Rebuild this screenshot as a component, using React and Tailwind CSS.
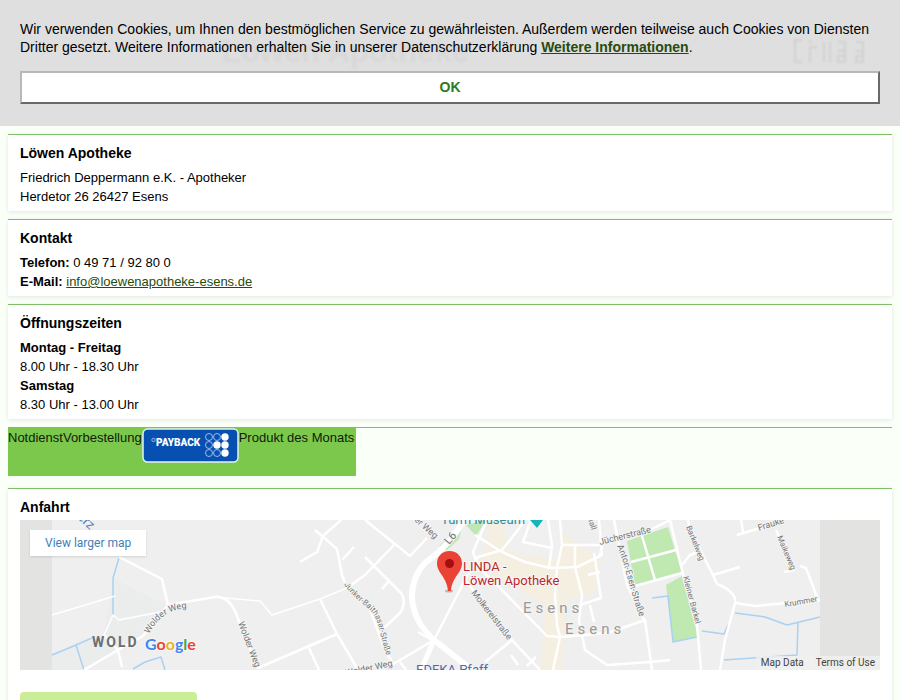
import React from "react";

function Card({ title, children }) {
  return (
    <section className="border-t border-[#7fbf6a] bg-white px-3 pt-2 pb-[5px] shadow-[0_1px_4px_rgba(0,0,0,0.1)]">
      <h2 className="mb-[5px] text-sm leading-5 font-bold">{title}</h2>
      {children}
    </section>
  );
}

function CookieBanner() {
  return (
    <div className="relative bg-[#dfdfdf] px-5 pt-5 pb-[22px]">
      <div
        aria-hidden="true"
        className="absolute inset-x-0 top-9 flex items-center justify-between pr-8 pl-[222px] text-[31px] leading-8 font-bold text-[#d8d8d8] blur-[1px]"
      >
        <span>Löwen Apotheke</span>
        <svg width="76" height="28" viewBox="0 0 76 28" fill="none" stroke="#cdcdcd" strokeWidth="1.5">
          <path d="M10 2H3v22h7M18 24V9h7M18 2v3M32 24V4M38 24V4M46 13h7v11h-7V18h7M64 13h7v11h-7V18h7M46 4h7v9M64 4h7v9" />
        </svg>
      </div>
      <p className="relative text-sm leading-[18px]">
        Wir verwenden Cookies, um Ihnen den bestmöglichen Service zu gewährleisten. Außerdem werden teilweise auch
        Cookies von Diensten Dritter gesetzt. Weitere Informationen erhalten Sie in unserer Datenschutzerklärung{" "}
        <a href="#datenschutz" className="font-bold text-[#274b0c] underline">
          Weitere Informationen
        </a>
        .
      </p>
      <button
        type="button"
        className="relative mt-[15px] block h-[33px] w-full border-2 border-t-[#b8b8b8] border-r-[#6b676b] border-b-[#6b676b] border-l-[#b8b8b8] bg-white pb-[2px] text-sm font-bold text-[#2c7a22]"
      >
        OK
      </button>
    </div>
  );
}

function Payback() {
  const dots = [
    [67, 9, 0], [75, 9, 0], [83, 9, 1],
    [67, 17, 0], [75, 17, 1], [83, 17, 1],
    [67, 25, 0], [75, 25, 0], [83, 25, 1],
  ];
  return (
    <svg width="97" height="35" viewBox="0 0 97 35" role="img" aria-label="Payback">
      <rect x="1" y="1" width="95" height="33" rx="4.5" fill="#0750b1" stroke="#e3f1f4" strokeWidth="1.5" />
      <circle cx="11.5" cy="12" r="1.7" fill="none" stroke="#b9d0ef" strokeWidth="0.8" />
      <text x="14" y="18" fill="#fff" fontFamily="Roboto, sans-serif" fontWeight="900" fontSize="10">
        PAYBACK
      </text>
      {dots.map(([x, y, on]) => (
        <circle
          key={x + "-" + y}
          cx={x}
          cy={y}
          r={on ? 3.7 : 3.5}
          fill={on ? "#fff" : "none"}
          stroke={on ? "none" : "#a9c6ee"}
          strokeWidth="0.9"
        />
      ))}
    </svg>
  );
}

function MapDrawing() {
  return (
    <svg
      className="block h-full w-full"
      viewBox="20 520 860 150"
      preserveAspectRatio="xMidYMid slice"
      fontFamily="Roboto, sans-serif"
      role="img"
      aria-label="Esens"
    >
      <defs>
        <path id="junker" d="M344 584C352 597 361 602 369 609C381 620 379 638 388 658L390 668" />
        <path id="wolder" d="M149 634C156 622 165 609 190 608" />
        <path id="anton" d="M617 546C626 565 630 595 642 622" />
      </defs>
      <rect x="20" y="520" width="860" height="150" fill="#efefef" />
      <path d="M113 578L168 606L150 628L118 650L84 670H52V655L104 635Z" fill="#ebeded" />
      <path d="M490 520L560 530L600 560L594 594L566 600L562 670H540L545 605L480 566Z" fill="#f4efe0" />
      <path d="M500 520H560V560L510 552Z" fill="#eff0ef" />
      <path d="M439 546L452 534L462 526L459 539L447 550ZM466 525L486 520L476 536Z" fill="#bde8b1" />
      <path d="M627 541L668 527L682 573L635 586ZM666 585L682 576L698 637L673 642Z" fill="#bfe9b0" />
      <g fill="none" stroke="#a9d1f3" strokeWidth="1.5" strokeLinejoin="round">
        <path d="M119 558L113 578V615M52 655L76 645L92 638M76 645L84 670M133 669L145 662L161 657L165 670" />
        <path d="M652 598L668 596L673 642L697 637M702 631L724 634L728 625M735 613L765 617L787 625L820 617M798 622L797 655L724 660" />
      </g>
      <g fill="none" stroke="#fff" strokeWidth="2.5" strokeLinejoin="round">
        <path d="M119 557L162 579L168 605L215 597Q232 595 240 625L258 668L337 634" />
        <path strokeWidth="1.5" d="M52 615L115 596M104 635L113 615L119 620L160 612M215 597L260 601L272 615L320 599L347 588" />
        <path d="M168 605L143 636L118 650L84 670M104 635L118 650L122 667" />
        <path d="M341 520L323 536L317 552L300 562M315 530L337 549L342 575L347 588L369 607L385 650L392 662M342 560L354 547" />
        <path d="M347 588L365 575L395 544M365 520L410 556L427 538M365 557L383 575L401 593Q407 602 400 613L384 628M388 582L382 589" />
        <path d="M320 599L337 634L358 670M309 648L319 670M434 640L395 663L380 668M400 662L406 670M418 632L432 640" />
        <path d="M434 640L465 580L478 557L502 550L518 530L525 520M487 520L473 552L478 567L500 588L547 636L562 637L608 633L645 620L652 670" />
        <path d="M475 535L502 552L525 562L550 568L577 567L602 555L599 520" />
        <path d="M560 520L562 545L557 568L555 595L557 625L560 637L553 670M548 520L552 545L549 568M562 545L601 545M531 520L523 542L552 548" />
        <path d="M575 545V567L582 595L579 620L585 650L607 665L650 662L670 660M580 605L601 598L594 553M588 575L600 572M590 605L594 622" />
        <path d="M465 580L512 640L540 670M512 640L485 662M600 555L603 540L650 530L670 520M511 655L518 665M527 666L536 657" />
        <path d="M614 520L627 585L645 622M670 520L682 570L697 625L701 670M635 586L682 573M631 562L676 550M642 536L655 580" />
        <path d="M688 520L690 530L713 575L717 584Q737 592 735 603L725 640L720 670M682 565L690 555L702 550M713 575L740 567" />
        <path d="M741 520L743 532M737 535L780 522M776 530L794 570L784 572M800 566L806 568L817 597M735 603L755 606L820 600" />
      </g>
      <g fill="none" stroke="#fff" strokeLinejoin="round">
        <path strokeWidth="6" d="M464 520Q450 545 425 563Q412 577 412 597Q413 621 434 640L472 670" />
        <path strokeWidth="5" d="M434 640L421 670" />
      </g>
      <g fill="#757575" stroke="#f4f4f4" strokeWidth="2" paintOrder="stroke" fontSize="9">
        <text><textPath href="#wolder">Wolder Weg</textPath></text>
        <text fontSize="8"><textPath href="#junker">Junker-Balthasar-Straße</textPath></text>
        <text><textPath href="#anton">Anton-Esen-Straße</textPath></text>
        <text transform="translate(238 623) rotate(69)">Wolder Weg</text>
        <text transform="translate(346 676) rotate(-12)">Wolder Weg</text>
        <text transform="translate(399 507) rotate(42)">Wolder Weg</text>
        <text transform="translate(449 545) rotate(-49)" fontSize="11">L6</text>
        <text transform="translate(471 593) rotate(52)">Molkereistraße</text>
        <text transform="translate(600 545) rotate(-14)">Jücherstraße</text>
        <text transform="translate(587 516) rotate(72)" fontSize="8">stall</text>
        <text transform="translate(686 527) rotate(68)" fontSize="8">Barkelweg</text>
        <text transform="translate(683 577) rotate(75)" fontSize="8">Kleiner Barkel</text>
        <text transform="translate(759 531) rotate(-18)">Frauke</text>
        <text transform="translate(777 537) rotate(67)" fontSize="8">Maikeweg</text>
        <text transform="translate(785 607) rotate(-10)" fontSize="8">Krummer</text>
      </g>
      <path d="M20 520H52V670H20ZM820 520H880V670H820Z" fill="#e3e3e1" />
      <text transform="translate(77 518) rotate(43)" fontSize="13" fill="#4b80bd">erz</text>
      <text x="441" y="524" fontSize="13" fill="#2d8d9b">Turm Museum</text>
      <path d="M530 520H543L537 528Z" fill="#13b5bd" />
      <text x="416" y="674" fontSize="13" fill="#4a6cad">EDEKA Pfaff</text>
      <text x="92" y="647" fontSize="14" fontWeight="700" letterSpacing="2" fill="#6b6e70">WOLD</text>
      <g fill="#999" stroke="#f5f3ee" strokeWidth="2" paintOrder="stroke" fontSize="15" letterSpacing="4">
        <text x="523" y="613">Esens</text>
        <text x="565" y="634">Esens</text>
      </g>
      <ellipse cx="449" cy="591" rx="4" ry="1.5" fill="#b8b8b8" />
      <path d="M449.500 551C442 551 437 556.500 437 563.500C437 573 447 577 448 591H451C452 577 462 573 462 563.500C462 556.500 457 551 449.500 551Z" fill="#ea4335" />
      <circle cx="449.500" cy="563.500" r="4.500" fill="#a50e0e" />
      <g fill="#b8282d" stroke="#f8f8f6" strokeWidth="2" paintOrder="stroke" fontSize="13">
        <text x="463" y="571">LINDA -</text>
        <text x="463" y="585">Löwen Apotheke</text>
      </g>
      <text x="145" y="650" fontFamily="Lato, sans-serif" fontSize="16" fontWeight="700" stroke="#f6f6f6" strokeWidth="2" paintOrder="stroke">
        <tspan fill="#4285f4">G</tspan>
        <tspan fill="#ea4335">o</tspan>
        <tspan fill="#e8b51f">o</tspan>
        <tspan fill="#4285f4">g</tspan>
        <tspan fill="#34a853">l</tspan>
        <tspan fill="#ea4335">e</tspan>
      </text>
    </svg>
  );
}

export default function App() {
  return (
    <div className="h-screen overflow-hidden bg-[#fafff8] font-['Liberation_Sans',Arial,sans-serif] text-[13px] leading-[19px] text-black">
      <CookieBanner />
      <main className="flex flex-col gap-2 p-2">
        <Card title="Löwen Apotheke">
          <p>Friedrich Deppermann e.K. - Apotheker</p>
          <p>Herdetor 26 26427 Esens</p>
        </Card>
        <Card title="Kontakt">
          <p><strong>Telefon:</strong> 0 49 71 / 92 80 0</p>
          <p>
            <strong>E-Mail:</strong>{" "}
            <a href="mailto:info@loewenapotheke-esens.de" className="text-[#274b0c] underline">
              info@loewenapotheke-esens.de
            </a>
          </p>
        </Card>
        <Card title="Öffnungszeiten">
          <p className="font-bold">Montag - Freitag</p>
          <p>8.00 Uhr - 18.30 Uhr</p>
          <p className="font-bold">Samstag</p>
          <p>8.30 Uhr - 13.00 Uhr</p>
        </Card>
        <nav className="mb-1 flex border-t border-[#7fbf6a]">
          <div className="flex h-12 items-start bg-[#7cc84c] pr-[2px] text-[#102008]">
            <a href="#notdienst">Notdienst</a>
            <a href="#vorbestellung">Vorbestellung</a>
            <a href="#payback"><Payback /></a>
            <a href="#produkt">Produkt des Monats</a>
          </div>
        </nav>
        <section className="border-t border-[#7fbf6a] bg-white px-3 pt-2 pb-3 shadow-[0_1px_4px_rgba(0,0,0,0.1)]">
          <h2 className="mb-[3px] text-sm leading-5 font-bold">Anfahrt</h2>
          <div className="relative h-[150px] overflow-hidden font-[Roboto,sans-serif]">
            <MapDrawing />
            <a
              href="#karte"
              className="absolute top-[10px] left-[10px] bg-white px-[15px] py-1 text-xs leading-[18px] text-[#427fb5] shadow-[0_1px_2px_rgba(0,0,0,0.12)]"
            >
              View larger map
            </a>
            <div className="absolute right-0 bottom-0 flex gap-3 bg-[#f0f0ef]/80 px-[5px] text-[10px] leading-[14px] text-[#444]">
              <a href="#kartendaten">Map Data</a>
              <a href="#nutzung">Terms of Use</a>
            </div>
          </div>
          <button type="button" aria-label="Anfahrt" className="mt-[22px] block h-8 w-[177px] rounded-[4px] bg-[#cbed97]" />
        </section>
      </main>
    </div>
  );
}
